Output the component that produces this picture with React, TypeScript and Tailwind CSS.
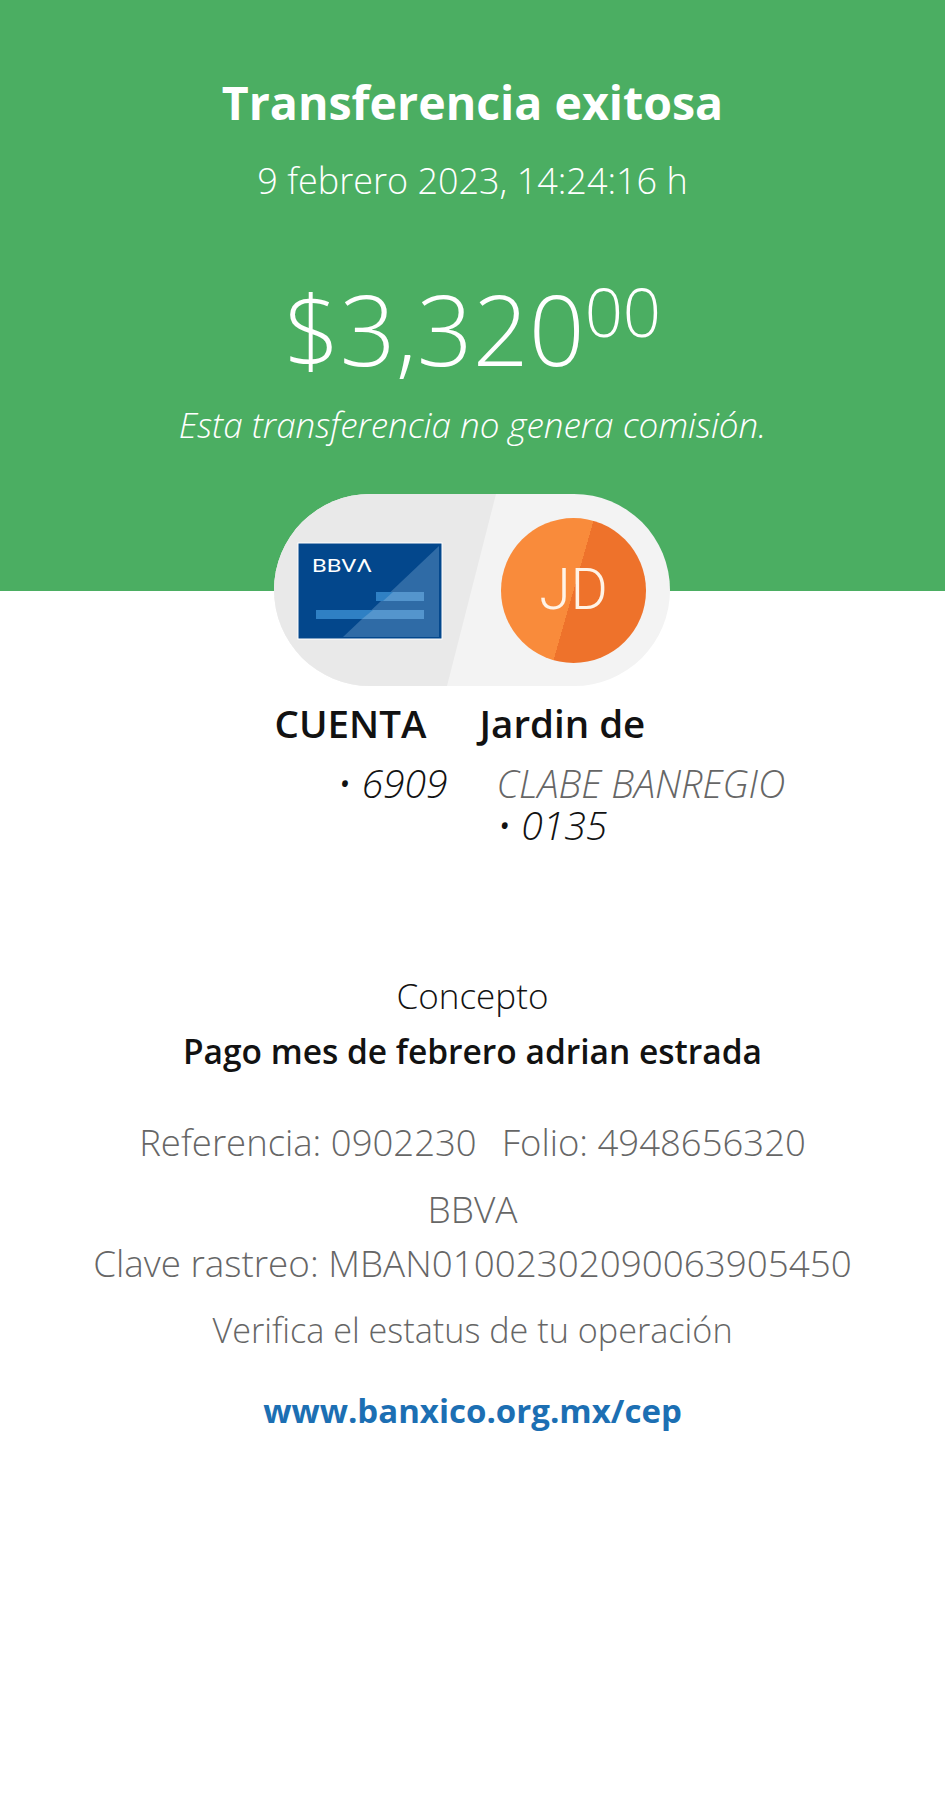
import React from "react";

const sans = { fontFamily: "'Open Sans', sans-serif" };

function BankCard() {
  return (
    <svg width="146" height="98" viewBox="0 0 146 98" className="shrink-0">
      <rect x="0.5" y="0.5" width="145" height="97" fill="#fff" />
      <rect x="1.5" y="1.5" width="143" height="95" fill="#03478c" />
      <polygon points="46,95 142,4 142,95" fill="#2f6ba6" />
      <rect x="79" y="50" width="48" height="9" fill="#2f80c4" />
      <rect x="19" y="68" width="108" height="9" fill="#2f80c4" />
      <polygon points="96,50 127,50 127,59 86,59" fill="#5495cd" />
      <polygon points="76,68 127,68 127,77 65,77" fill="#5495cd" />
      <text x="15" y="30" fill="#fff" fontSize="19" fontWeight="400" textLength="60" lengthAdjust="spacingAndGlyphs" fontFamily="Roboto, sans-serif">BBVΛ</text>
    </svg>
  );
}

function TransferPill() {
  return (
    <div className="relative -mt-[97px] mr-[1px] flex h-[192px] w-[396px] items-center overflow-hidden rounded-full bg-[#f3f3f3]">
      <svg width="396" height="192" viewBox="0 0 396 192" className="absolute inset-0">
        <polygon points="0,0 222,0 173,192 0,192" fill="#e9e9e9" />
      </svg>
      <div className="relative ml-[23px] mt-[2px]">
        <BankCard />
      </div>
      <div className="relative ml-[58px] flex h-[145px] w-[145px] items-center justify-center rounded-full bg-[linear-gradient(106deg,#f98b3b_50%,#ee722b_50%)] font-['Roboto'] text-[57px] font-light text-[#fff3e6]">
        JD
      </div>
    </div>
  );
}

export default function App() {
  return (
    <div className="flex min-h-[1800px] w-full flex-col items-center bg-white" style={sans}>
      <div className="flex h-[591px] w-full flex-col items-center bg-[#4bae62] text-white">
        <h1 className="mt-[72px] text-[46.5px] font-bold leading-[60px]">Transferencia exitosa</h1>
        <p className="mt-[28px] text-[36px] font-[350] leading-[42px]">9 febrero 2023, 14:24:16 h</p>
        <div className="mt-[77px] flex items-start font-light leading-none">
          <span className="text-[98px]">$3,320</span>
          <span className="mt-[-1px] text-[67px]">00</span>
        </div>
        <p className="mt-[27px] text-[35px] font-[350] italic leading-[42px]">Esta transferencia no genera comisión.</p>
      </div>

      <TransferPill />

      <div className="mt-[15px] flex w-[396px] text-[#121212]">
        <div className="w-[205px] shrink-0">
          <div className="text-[38.5px] font-semibold leading-[44px]">CUENTA</div>
          <div className="mt-[17px] pr-[32px] text-right text-[39px] font-[350] italic leading-[42px]">• 6909</div>
        </div>
        <div className="shrink-0 whitespace-nowrap">
          <div className="text-[38.5px] font-semibold leading-[44px]">Jardin de</div>
          <div className="mt-[17px] ml-[17px] text-[38px] font-[350] italic leading-[42px] text-[#666]">CLABE BANREGIO</div>
          <div className="ml-[17px] text-[39px] font-[350] italic leading-[42px]">• 0135</div>
        </div>
      </div>

      <p className="mt-[129px] text-[35px] font-[350] leading-[42px] text-[#121212]">Concepto</p>
      <p className="mt-[13px] text-[33.5px] font-semibold leading-[42px] text-[#121212]">Pago mes de febrero adrian estrada</p>

      <div className="mt-[49px] flex gap-[25px] text-[36.5px] font-[350] leading-[42px] text-[#666]">
        <span>Referencia: 0902230</span>
        <span>Folio: 4948656320</span>
      </div>
      <p className="mt-[25px] text-[37px] font-[350] leading-[42px] text-[#666]">BBVA</p>
      <p className="mt-[12px] text-[36.8px] font-[350] leading-[42px] text-[#666]">Clave rastreo: MBAN01002302090063905450</p>
      <p className="mt-[25px] text-[34.2px] font-[350] leading-[42px] text-[#666]">Verifica el estatus de tu operación</p>
      <a className="mt-[39px] text-[33px] font-bold leading-[42px] text-[#1c6fb3]">www.banxico.org.mx/cep</a>
    </div>
  );
}
